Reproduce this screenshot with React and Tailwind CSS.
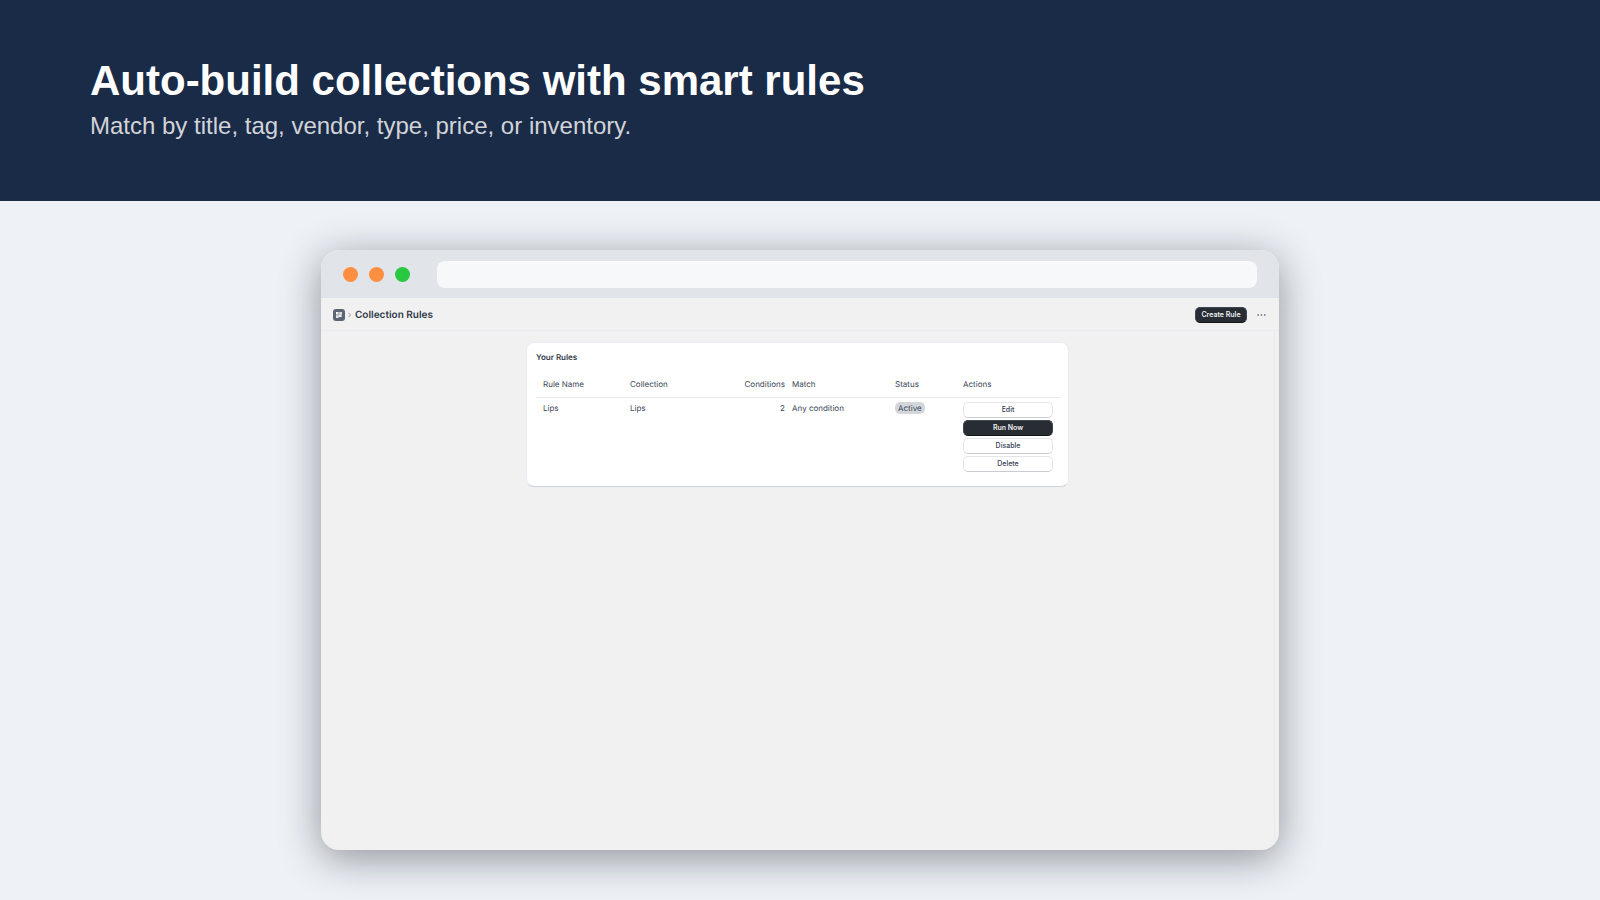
const rules = [
    { name: "Lips", collection: "Lips", conditions: 2, match: "Any condition", status: "Active" },
];

const plainButton =
    "h-4 w-full rounded-[5px] border border-[#e3e5e9] border-b-[#c9ccd2] bg-white text-[7px] leading-3 font-medium text-[#334155]";
const darkButton =
    "h-4 rounded-[5px] border border-[#3d4654] border-b-[#14171d] bg-[#282c33] text-[7px] leading-3 font-semibold text-[#eef0f3]";

function AppIcon() {
    return (
        <svg className="size-3" viewBox="0 0 12 12" aria-hidden="true">
            <rect width="12" height="12" rx="3" fill="#5b6675" />
            <rect x="3" y="3" width="2.6" height="2.6" fill="#f1f3f5" />
            <rect x="6.3" y="3" width="2.7" height="2.6" fill="#dfe2e6" />
            <rect x="3" y="6.2" width="2.6" height="2.8" fill="#dfe2e6" />
            <rect x="5.6" y="5.6" width="3" height="2.4" fill="#f1f3f5" />
        </svg>
    );
}

function TitleBar() {
    return (
        <div className="flex h-12 items-center bg-[#e1e4e9] px-[22px]">
            <div className="flex gap-[11px]">
                <span className="size-[15px] rounded-full bg-[#ff8f40]" />
                <span className="size-[15px] rounded-full bg-[#ff8f40]" />
                <span className="size-[15px] rounded-full bg-[#28c840]" />
            </div>
            <input
                type="text"
                aria-label="Address"
                className="ml-[27px] h-[27px] min-w-0 flex-1 rounded-lg bg-[#f6f8fa] px-3 text-xs outline-none"
            />
        </div>
    );
}

function PageHeader() {
    return (
        <div className="flex h-[33px] items-center border-b border-[#e8ecf0] pt-px pr-[13px] pl-3">
            <AppIcon />
            <svg className="mr-1 ml-[3px] h-[6px] w-[3px]" viewBox="0 0 3 6" fill="none" stroke="#8b929d" aria-hidden="true">
                <path d="M0.5 0.8l2 2.2-2 2.2" strokeWidth="0.9" />
            </svg>
            <h2 className="flex-1 text-[10px] leading-4 font-semibold text-[#2f3948]">Collection Rules</h2>
            <button type="button" className={`${darkButton} w-[52px]`}>
                Create Rule
            </button>
            <button type="button" aria-label="More actions" className="ml-[10px] flex h-4 items-center">
                <svg className="h-2 w-[9px]" viewBox="0 0 9 8" fill="#7b8491" aria-hidden="true">
                    <circle cx="1.2" cy="4" r="0.9" />
                    <circle cx="4.5" cy="4" r="0.9" />
                    <circle cx="7.8" cy="4" r="0.9" />
                </svg>
            </button>
        </div>
    );
}

function RulesTable() {
    return (
        <table className="mt-3 w-full table-fixed text-left text-[8px] leading-3 text-[#3a4656]">
            <colgroup>
                <col className="w-[87px]" />
                <col className="w-[87px]" />
                <col className="w-[75px]" />
                <col className="w-[103px]" />
                <col className="w-[68px]" />
                <col />
            </colgroup>
            <thead>
                <tr className="border-b border-[#e8eaed] *:px-[7px] *:pt-[3px] *:pb-[7px] *:font-normal">
                    <th>Rule Name</th>
                    <th>Collection</th>
                    <th className="pr-0! text-right">Conditions</th>
                    <th>Match</th>
                    <th>Status</th>
                    <th>Actions</th>
                </tr>
            </thead>
            <tbody>
                {rules.map((rule) => (
                    <tr key={rule.name} className="align-top *:px-[7px] *:pt-1">
                        <td>{rule.name}</td>
                        <td>{rule.collection}</td>
                        <td className="pr-0! text-right">{rule.conditions}</td>
                        <td>{rule.match}</td>
                        <td>
                            <span className="inline-block rounded-[5px] bg-[#d3d7dc] px-[3px]">{rule.status}</span>
                        </td>
                        <td>
                            <div className="flex flex-col gap-[2px]">
                                <button type="button" className={plainButton}>Edit</button>
                                <button type="button" className={`${darkButton} w-full`}>Run Now</button>
                                <button type="button" className={plainButton}>Disable</button>
                                <button type="button" className={plainButton}>Delete</button>
                            </div>
                        </td>
                    </tr>
                ))}
            </tbody>
        </table>
    );
}

export default function App() {
    return (
        <div className="min-h-screen bg-[#eef2f7] pb-[50px]">
            <header className="bg-[#1a2b48] px-[90px] pt-14 pb-[59px] font-['Liberation_Sans',Arial,sans-serif]">
                <h1 className="text-[42px] leading-[50px] font-bold text-white">Auto-build collections with smart rules</h1>
                <p className="mt-1 text-[24px] leading-8 text-[#d2d4d8]">
                    Match by title, tag, vendor, type, price, or inventory.
                </p>
            </header>

            {/* Browser window */}
            <main className="mx-auto mt-[49px] w-full max-w-[958px] overflow-hidden rounded-[18px] bg-[#f1f1f1] font-[Inter,sans-serif] shadow-[0_8px_40px_rgba(10,12,20,0.42)] [text-rendering:geometricPrecision]">
                <TitleBar />
                <PageHeader />
                <div className="mr-1 min-h-[519px] border-r border-[#e8ecf0] px-3 pt-[11px]">
                    <section className="mx-auto w-full max-w-[543px] rounded-lg border border-[#e8ecf0] border-b-[#ced3d9] bg-white pt-2 pr-2 pb-[14px] pl-[9px]">
                        <h3 className="text-[8px] leading-3 font-semibold text-[#2f3948]">Your Rules</h3>
                        <RulesTable />
                    </section>
                </div>
            </main>
        </div>
    );
}
